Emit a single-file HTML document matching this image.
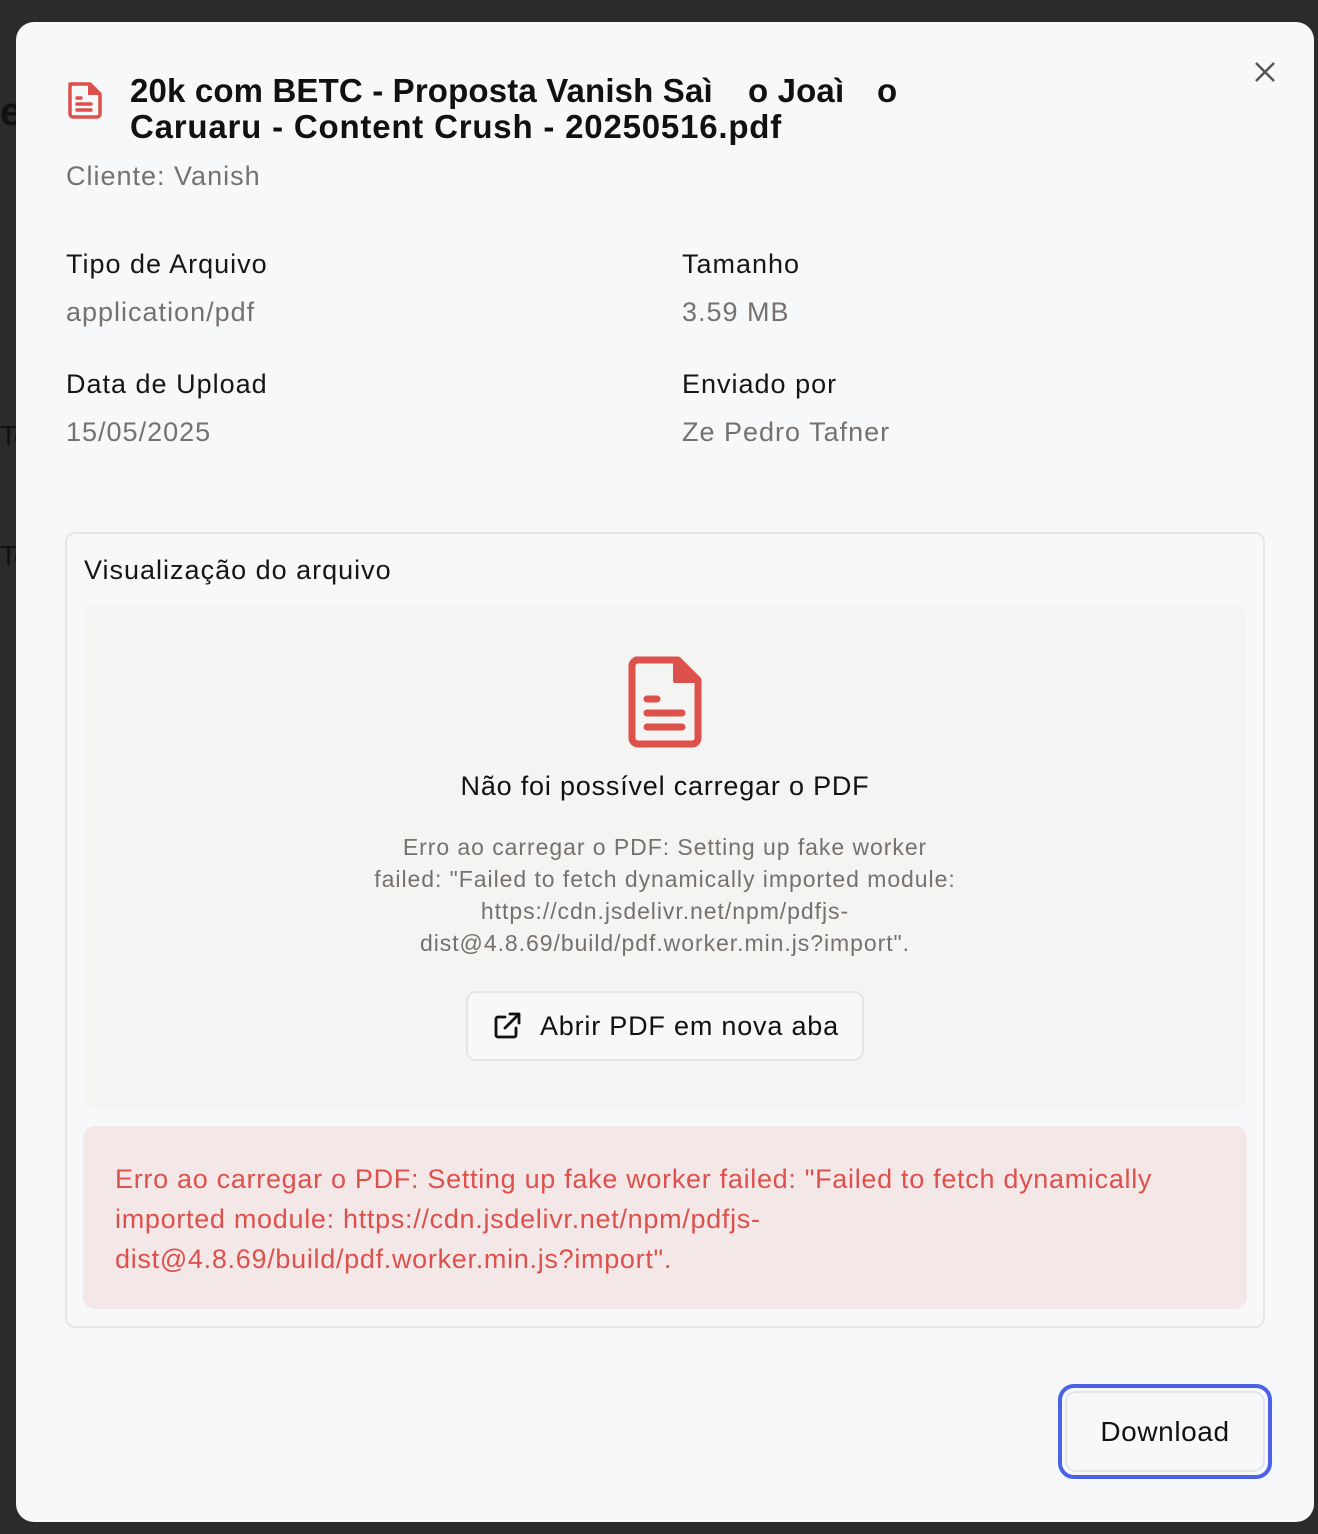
<!DOCTYPE html>
<html><head><meta charset="utf-8"><style>
*{margin:0;padding:0;box-sizing:border-box}
body{width:1318px;height:1534px;background:#2b2b2b;font-family:"Liberation Sans",sans-serif;position:relative;overflow:hidden;color:#111}
.a{position:absolute;white-space:nowrap}
.modal{position:absolute;left:16px;top:22px;width:1298px;height:1500px;background:#f7f8fa;border-radius:18px}
.t{font-size:33px;font-weight:bold;letter-spacing:0.15px;color:#111}
.lab{font-size:27px;letter-spacing:1px;color:#161616}
.val{font-size:27px;letter-spacing:1px;color:#76716d}
</style></head><body>
<div class="a" style="left:0;top:90px;font-size:40px;color:#111;font-weight:bold">e</div>
<div class="a" style="left:0;top:420px;font-size:28px;color:#111">To</div>
<div class="a" style="left:0;top:540px;font-size:28px;color:#111">To</div>
<div class="modal"></div>
<svg class="a" style="left:66px;top:80px" width="38" height="40" viewBox="0 0 38 40"><path d="M4 4h20l10 10v20a3 3 0 0 1-3 3H7a3 3 0 0 1-3-3V7a3 3 0 0 1 3-3z" fill="none" stroke="#dd514c" stroke-width="3.5" stroke-linejoin="round"/><path d="M23 4v10h11" fill="#dd514c" stroke="#dd514c" stroke-width="2"/><path d="M11 18h4M11 24h14M11 30h14" stroke="#dd514c" stroke-width="3.5" stroke-linecap="round"/></svg>
<div class="a t" style="left:130px;top:72px">20k com BETC - Proposta Vanish Saì</div>
<div class="a t" style="left:748px;top:72px">o Joaì</div>
<div class="a t" style="left:877px;top:72px">o</div>
<div class="a t" style="left:130px;top:108px;letter-spacing:0.8px">Caruaru - Content Crush - 20250516.pdf</div>
<svg class="a" style="left:1253px;top:60px" width="24" height="24" viewBox="0 0 24 24"><path d="M3 3l18 18M21 3L3 21" stroke="#555" stroke-width="2.5"/></svg>
<div class="a val" style="left:66px;top:161px">Cliente: Vanish</div>
<div class="a lab" style="left:66px;top:249px">Tipo de Arquivo</div>
<div class="a val" style="left:66px;top:297px">application/pdf</div>
<div class="a lab" style="left:682px;top:249px">Tamanho</div>
<div class="a val" style="left:682px;top:297px">3.59 MB</div>
<div class="a lab" style="left:66px;top:369px">Data de Upload</div>
<div class="a val" style="left:66px;top:417px">15/05/2025</div>
<div class="a lab" style="left:682px;top:369px">Enviado por</div>
<div class="a val" style="left:682px;top:417px">Ze Pedro Tafner</div>
<div class="a" style="left:65px;top:532px;width:1200px;height:796px;border:2px solid #e4e6ea;border-radius:10px;background:#f7f8fa"></div>
<div class="a lab" style="left:84px;top:555px">Visualização do arquivo</div>
<div class="a" style="left:84px;top:606px;width:1162px;height:503px;background:#f4f4f3;border-radius:10px"></div>
<svg class="a" style="left:628px;top:656px" width="74" height="92" viewBox="0 0 74 92"><path d="M8 4h42l20 20v58a6 6 0 0 1-6 6H10a6 6 0 0 1-6-6V10a6 6 0 0 1 6-6z" fill="none" stroke="#dd514c" stroke-width="7" stroke-linejoin="round"/><path d="M47 4v21h23" fill="#dd514c" stroke="#dd514c" stroke-width="4" stroke-linejoin="round"/><path d="M19 43h10M19 57h35M19 71h35" stroke="#dd514c" stroke-width="7" stroke-linecap="round"/></svg>
<div class="a" style="left:84px;width:1162px;top:771px;text-align:center;font-size:27px;letter-spacing:0.8px;color:#111">Não foi possível carregar o PDF</div>
<div class="a" style="left:84px;width:1162px;top:831px;text-align:center;font-size:23px;letter-spacing:0.95px;line-height:32px;color:#76716d;white-space:normal">Erro ao carregar o PDF: Setting up fake worker<br>failed: "Failed to fetch dynamically imported module:<br>https://cdn.jsdelivr.net/npm/pdfjs-<br>dist@4.8.69/build/pdf.worker.min.js?import".</div>
<div class="a" style="left:466px;top:991px;width:398px;height:70px;border:2px solid #e3e5e9;border-radius:10px;background:#f7f8fa"></div>
<svg class="a" style="left:493px;top:1012px" width="28" height="28" viewBox="0 0 28 28"><path d="M12 5H5a2 2 0 0 0-2 2v16a2 2 0 0 0 2 2h16a2 2 0 0 0 2-2v-7M17 2h9v9M26 2L12 16" fill="none" stroke="#111" stroke-width="2.8" stroke-linecap="round" stroke-linejoin="round"/></svg>
<div class="a" style="left:540px;top:1011px;font-size:27px;letter-spacing:0.8px;color:#111">Abrir PDF em nova aba</div>
<div class="a" style="left:83px;top:1126px;width:1164px;height:183px;background:#f4e7e8;border-radius:12px"></div>
<div class="a" style="left:115px;top:1159px;font-size:27px;letter-spacing:0.7px;line-height:40px;color:#dd514c">Erro ao carregar o PDF: Setting up fake worker failed: "Failed to fetch dynamically<br>imported module: https://cdn.jsdelivr.net/npm/pdfjs-<br>dist@4.8.69/build/pdf.worker.min.js?import".</div>
<div class="a" style="left:1058px;top:1384px;width:214px;height:95px;border:4px solid #4a63e6;border-radius:16px"></div>
<div class="a" style="left:1065px;top:1391px;width:200px;height:81px;border:2px solid #e3e5e9;border-radius:11px;background:#f7f8fa"></div>
<div class="a" style="left:1065px;width:200px;top:1416px;text-align:center;font-size:28px;letter-spacing:0.6px;color:#111">Download</div>
</body></html>
